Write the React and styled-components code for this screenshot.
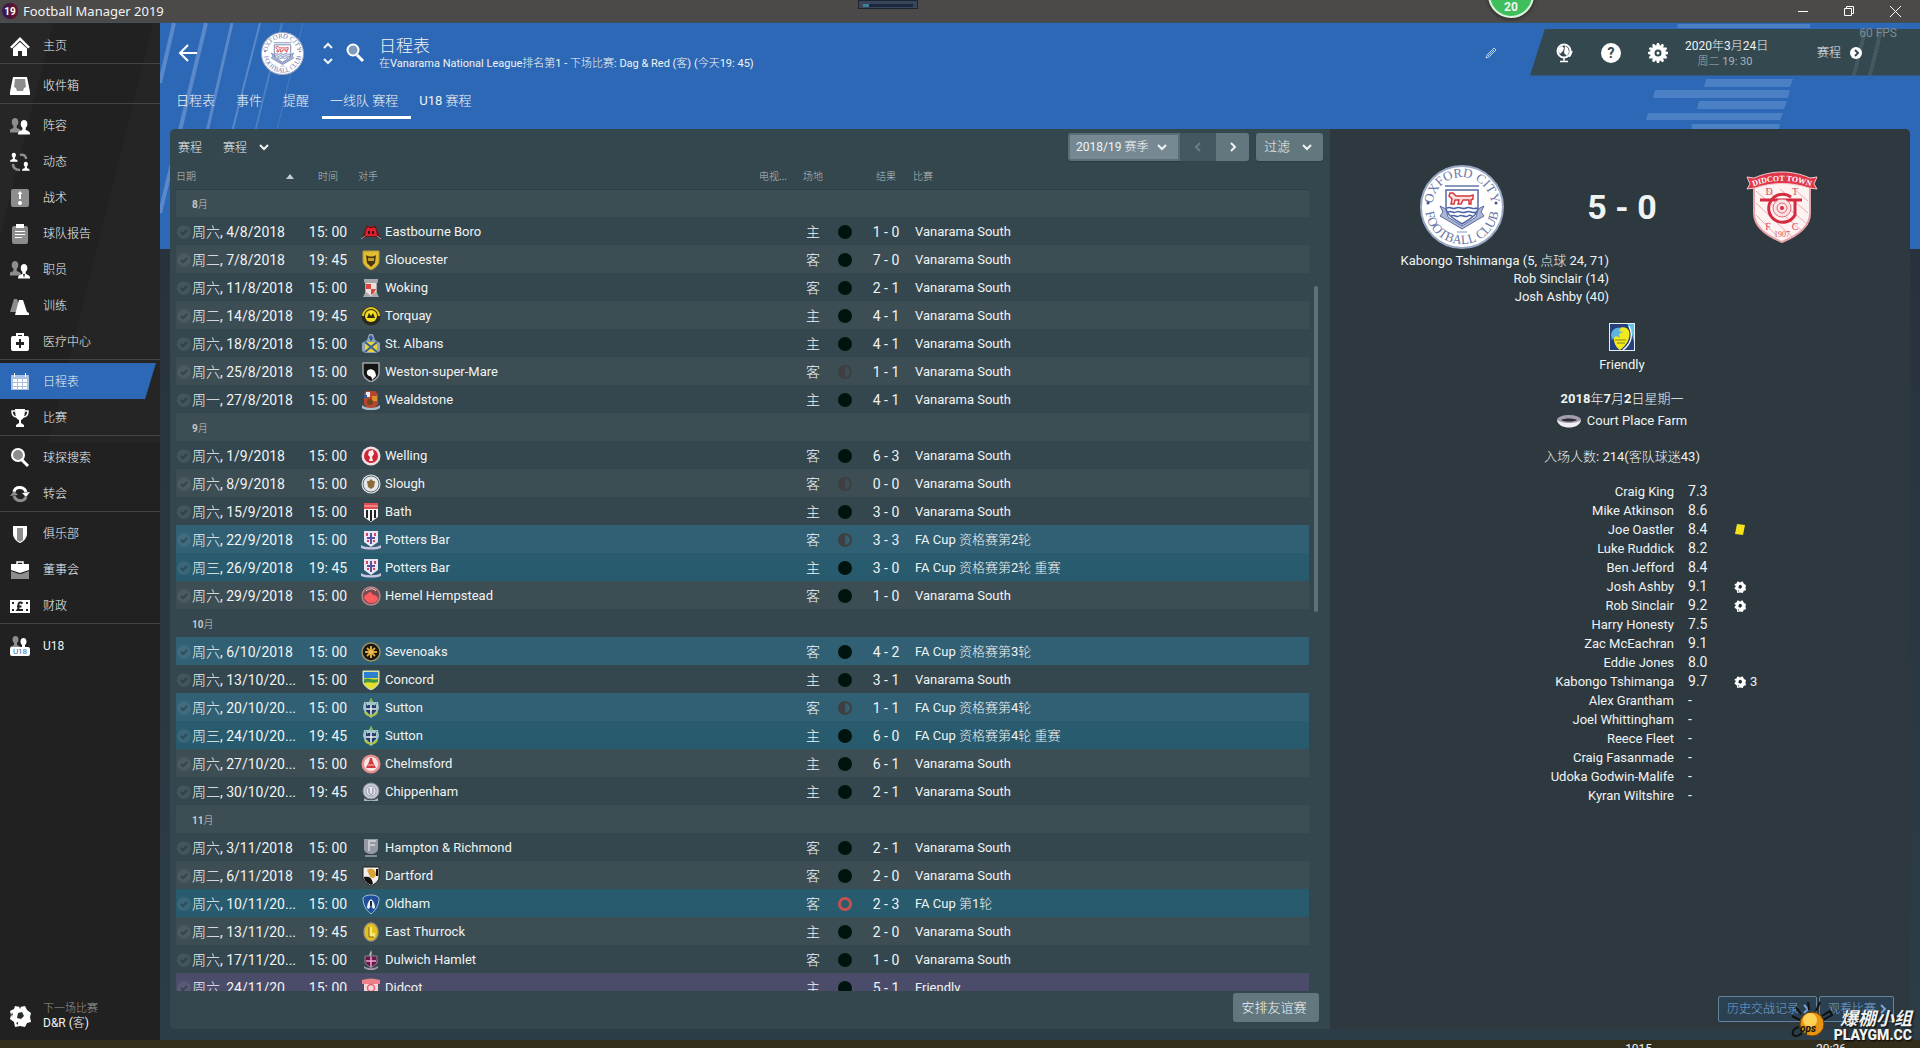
import styled, { createGlobalStyle, css } from "styled-components";

const menuGroups = [
  [{ icon: "home", label: "主页" }],
  [{ icon: "inbox", label: "收件箱" }],
  [
    { icon: "squad", label: "阵容" },
    { icon: "dynamics", label: "动态" },
    { icon: "tactics", label: "战术" },
    { icon: "report", label: "球队报告" },
    { icon: "staff", label: "职员" },
    { icon: "training", label: "训练" },
    { icon: "medical", label: "医疗中心" },
  ],
  [
    { icon: "calendar", label: "日程表", active: true },
    { icon: "trophy", label: "比赛" },
  ],
  [
    { icon: "search", label: "球探搜索" },
    { icon: "transfer", label: "转会" },
  ],
  [
    { icon: "club", label: "俱乐部" },
    { icon: "board", label: "董事会" },
    { icon: "finance", label: "财政" },
  ],
  [{ icon: "u18", label: "U18" }],
];

const tabs = ["日程表", "事件", "提醒", "一线队 赛程", "U18 赛程"];

const VS = "Vanarama South";

// [date, time, crest, opponent, venue, outcome, score, competition, kind]
const fixtures = [
  { month: "8" },
  ["周六, 4/8/2018", "15: 00", "eastbourne", "Eastbourne Boro", "主", "win", "1 - 0", VS],
  ["周二, 7/8/2018", "19: 45", "gloucester", "Gloucester", "客", "win", "7 - 0", VS],
  ["周六, 11/8/2018", "15: 00", "woking", "Woking", "客", "win", "2 - 1", VS],
  ["周二, 14/8/2018", "19: 45", "torquay", "Torquay", "主", "win", "4 - 1", VS],
  ["周六, 18/8/2018", "15: 00", "albans", "St. Albans", "主", "win", "4 - 1", VS],
  ["周六, 25/8/2018", "15: 00", "weston", "Weston-super-Mare", "客", "draw", "1 - 1", VS],
  ["周一, 27/8/2018", "15: 00", "wealdstone", "Wealdstone", "主", "win", "4 - 1", VS],
  { month: "9" },
  ["周六, 1/9/2018", "15: 00", "welling", "Welling", "客", "win", "6 - 3", VS],
  ["周六, 8/9/2018", "15: 00", "slough", "Slough", "客", "draw", "0 - 0", VS],
  ["周六, 15/9/2018", "15: 00", "bath", "Bath", "主", "win", "3 - 0", VS],
  ["周六, 22/9/2018", "15: 00", "potters", "Potters Bar", "客", "draw", "3 - 3", "FA Cup 资格赛第2轮", "cup"],
  ["周三, 26/9/2018", "19: 45", "potters", "Potters Bar", "主", "win", "3 - 0", "FA Cup 资格赛第2轮 重赛", "cup"],
  ["周六, 29/9/2018", "15: 00", "hemel", "Hemel Hempstead", "客", "win", "1 - 0", VS],
  { month: "10" },
  ["周六, 6/10/2018", "15: 00", "sevenoaks", "Sevenoaks", "客", "win", "4 - 2", "FA Cup 资格赛第3轮", "cup"],
  ["周六, 13/10/20...", "15: 00", "concord", "Concord", "主", "win", "3 - 1", VS],
  ["周六, 20/10/20...", "15: 00", "sutton", "Sutton", "客", "draw", "1 - 1", "FA Cup 资格赛第4轮", "cup"],
  ["周三, 24/10/20...", "19: 45", "sutton", "Sutton", "主", "win", "6 - 0", "FA Cup 资格赛第4轮 重赛", "cup"],
  ["周六, 27/10/20...", "15: 00", "chelmsford", "Chelmsford", "主", "win", "6 - 1", VS],
  ["周二, 30/10/20...", "19: 45", "chippenham", "Chippenham", "主", "win", "2 - 1", VS],
  { month: "11" },
  ["周六, 3/11/2018", "15: 00", "hampton", "Hampton & Richmond", "客", "win", "2 - 1", VS],
  ["周二, 6/11/2018", "19: 45", "dartford", "Dartford", "客", "win", "2 - 0", VS],
  ["周六, 10/11/20...", "15: 00", "oldham", "Oldham", "客", "loss", "2 - 3", "FA Cup 第1轮", "cup"],
  ["周二, 13/11/20...", "19: 45", "thurrock", "East Thurrock", "主", "win", "2 - 0", VS],
  ["周六, 17/11/20...", "15: 00", "dulwich", "Dulwich Hamlet", "客", "win", "1 - 0", VS],
  ["周六, 24/11/20...", "15: 00", "didcot", "Didcot", "主", "win", "5 - 1", "Friendly", "friendly"],
];

const players = [
  ["Craig King", "7.3"],
  ["Mike Atkinson", "8.6"],
  ["Joe Oastler", "8.4", "card"],
  ["Luke Ruddick", "8.2"],
  ["Ben Jefford", "8.4"],
  ["Josh Ashby", "9.1", "goal"],
  ["Rob Sinclair", "9.2", "goal"],
  ["Harry Honesty", "7.5"],
  ["Zac McEachran", "9.1"],
  ["Eddie Jones", "8.0"],
  ["Kabongo Tshimanga", "9.7", "goal", "3"],
  ["Alex Grantham", "-"],
  ["Joel Whittingham", "-"],
  ["Reece Fleet", "-"],
  ["Craig Fasanmade", "-"],
  ["Udoka Godwin-Malife", "-"],
  ["Kyran Wiltshire", "-"],
];

/* ---------- icons ---------- */

const person = "M0 14c0-3 2-3 4-4V8C3 7 2.500 6 2.500 4.500 2.500 2 4 1 5.500 1S8.500 2 8.500 4.500C8.500 6 8 7 7 8v2c2 1 4 1 4 4z";

const menuIcons = {
  home: (
    <g fill="#fff">
      <path d="M10 1 0 11l2 1.500 8-8 8 8 2-1.500z" />
      <path d="M3 12.500 10 6l7 6.500V20h-5v-5H8v5H3z" />
    </g>
  ),
  inbox: (
    <g>
      <path d="M3 1h14l3 15v3H0v-3z" fill="#fff" />
      <path d="M5 3h10l1 8-2 1-1 3H7l-1-3-2-1z" fill="#8d8d8d" />
    </g>
  ),
  squad: (
    <g>
      <path d={person} transform="translate(-1 1) scale(1.100)" fill="#8d8d8d" />
      <path d={person} transform="translate(8 3) scale(1.100)" fill="#fff" />
    </g>
  ),
  dynamics: (
    <g>
      <path d={person} transform="translate(0 0) scale(.7)" fill="#fff" />
      <path d={person} transform="translate(12 9) scale(.7)" fill="#fff" />
      <path d="M10 3c4-1 6 1 6 4M3 12c0 4 3 6 7 6" fill="none" stroke="#8d8d8d" strokeWidth="2.500" />
    </g>
  ),
  tactics: (
    <g>
      <rect x="1" y="1" width="18" height="18" rx="2" fill="#8d8d8d" />
      <path d="M10 3 7.500 6H9v5h2V6h1.500z" fill="#fff" />
      <circle cx="10" cy="15" r="2" fill="#fff" />
    </g>
  ),
  report: (
    <g>
      <rect x="2" y="2" width="16" height="18" rx="2" fill="#8d8d8d" />
      <path d="M6 0h8v4H6zM5 7h10v1H5zM5 10h10v1H5zM5 13h7v1H5z" fill="#fff" />
    </g>
  ),
  staff: (
    <g>
      <path d={person} transform="translate(-1 0) scale(1.100)" fill="#8d8d8d" />
      <path d={person} transform="translate(8 3) scale(1.100)" fill="#fff" />
      <path d="m13 14 1 4 1-4z" fill="#222" />
    </g>
  ),
  training: (
    <g>
      <path d="M0 16 4 3h3l5 13z" fill="#8d8d8d" />
      <path d="M5 19 9 4h4l4 12 2 1v2z" fill="#fff" />
    </g>
  ),
  medical: (
    <g>
      <path d="M7 5V2h6v3" fill="none" stroke="#fff" strokeWidth="2" />
      <rect x="1" y="4" width="18" height="15" rx="2" fill="#fff" />
      <path d="M9 7h2v3h3v3h-3v3H9v-3H6v-3h3z" fill="#222" />
    </g>
  ),
  calendar: (
    <g>
      <path d="M1 3h18v15H1z" fill="#a8c0e2" />
      <path d="M4 1h1v4H4zM15 1h1v4h-1zM3 7h4v3H3zM8 7h4v3H8zM13 7h4v3h-4zM3 11h4v3H3zM8 11h4v3H8zM13 11h4v3h-4zM3 15h4v2H3zM8 15h4v2H8zM13 15h4v2h-4z" fill="#fff" />
    </g>
  ),
  trophy: (
    <g>
      <path d="M5 1h10c0 6-1 10-4 11v3l3 2v2H6v-2l3-2v-3C6 11 5 7 5 1z" fill="#fff" />
      <path d="M5 3H2c0 4 1 6 5 6M15 3h3c0 4-1 6-5 6" fill="none" stroke="#fff" strokeWidth="1.500" />
    </g>
  ),
  search: (
    <g>
      <circle cx="8" cy="7" r="6" fill="#8d8d8d" stroke="#fff" strokeWidth="2" />
      <path d="m12 12 6 6" stroke="#fff" strokeWidth="3" />
    </g>
  ),
  transfer: (
    <g fill="none" strokeWidth="3">
      <path d="M4 8c1-6 10-6 12 0" stroke="#fff" />
      <path d="M4 12c2 6 10 6 12 1" stroke="#8d8d8d" />
      <path d="m12 9 8-1-4 5z" fill="#fff" stroke="none" />
      <path d="m0 12 4-5 4 4z" fill="#8d8d8d" stroke="none" />
    </g>
  ),
  club: (
    <g>
      <path d="M3 2h14v8c0 4-4 8-7 9-3-1-7-5-7-9z" fill="#fff" />
      <path d="M7 4h6v12l-3 2-3-2z" fill="#8d8d8d" />
    </g>
  ),
  board: (
    <g>
      <path d="M7 5V2h6v3" fill="none" stroke="#fff" strokeWidth="1.500" />
      <path d="M1 4h18v6l-9 3-9-3z" fill="#fff" />
      <path d="M1 11l8 3h2l8-3v8H1z" fill="#8d8d8d" />
    </g>
  ),
  finance: (
    <g>
      <path d="M0 4h20v13H0z" fill="#fff" />
      <path d="M2 6h2v2H2zM16 6h2v2h-2zM2 13h2v2H2zM16 13h2v2h-2z" fill="#222" />
      <path d="M12.500 7.500c-2-2-4-1-4 1 0 3 1 3-1 5.500h5.500M7 10.500h4.500" fill="none" stroke="#222" strokeWidth="2" />
    </g>
  ),
  u18: (
    <g>
      <path d={person} transform="translate(0 -1)" fill="#8d8d8d" />
      <path d={person} transform="translate(8 1)" fill="#fff" />
      <rect y="11" width="20" height="9" rx="2" fill="#fff" />
      <text x="10" y="18" fontSize="8" textAnchor="middle" fill="#2c68b5">U18</text>
    </g>
  ),
};

function BallIcon({ size }) {
  return (
    <svg width={size} height={size} viewBox="0 0 22 22" aria-hidden="true">
      <path d="M6 1l5 1 5-1 2 4 4 3-1 4 1 5-4 1-2 4-5-1-5 1-1-5-4-3 1-4-1-4 4-2z" fill="#fff" />
      <path d="m9 8 4-1 2 4-3 3-4-1z" fill="#242e33" />
      <path d="m10 1 2 1-1 2zM2 9l2-1-1 4zM7 18l2-1 0 3z" fill="#242e33" />
    </svg>
  );
}

function Chevron({ dir = "down", size = 12, width = 2 }) {
  const d = {
    down: "m2 4 4 4 4-4",
    up: "m2 8 4-4 4 4",
    left: "m8 2-4 4 4 4",
    right: "m4 2 4 4-4 4",
  }[dir];
  return (
    <svg width={size} height={size} viewBox="0 0 12 12" aria-hidden="true">
      <path d={d} fill="none" stroke="currentColor" strokeWidth={width} />
    </svg>
  );
}

const shield = "M2 1h16v10c0 4-4 7-8 9-4-2-8-5-8-9z";

const crests = {
  eastbourne: (
    <g>
      <path d="M0 17 4 8l1-4h10l1 4 4 9-5-2H5z" fill="#5a1a1e" />
      <path d="M5 8c2-5 8-5 10 0l1 6H4z" fill="#e0202e" />
      <path d="M7 9h2v3H7zM11 9h2v3h-2zM8 5h4v1H8z" fill="#3b0d10" />
      <path d="M0 17l4-3M20 17l-4-3" stroke="#a9a5a5" />
    </g>
  ),
  gloucester: (
    <g>
      <path d={shield} fill="#e2bd2e" stroke="#b39b42" />
      <path d="M5 5c3 2 7 2 10 0l-1 8-4 4-4-4z" fill="#463713" />
      <path d="M7 8h6v3H7z" fill="#c79d23" />
    </g>
  ),
  woking: (
    <g>
      <path d="M3 1h14v3l-1 1v10l2 4H2l2-4V5L3 4z" fill="#a8a9aa" />
      <path d="M5 5h10v9l-5 4-5-4z" fill="#f1dede" />
      <path d="M5 6h5v5H5zM10 11h5l-2 4-3 2z" fill="#dd463f" />
    </g>
  ),
  torquay: (
    <g>
      <circle cx="10" cy="10" r="9.500" fill="#2a2a1c" />
      <path d="M1 10a9 9 0 0 1 18 0z" fill="#e5c91a" />
      <circle cx="10" cy="10" r="7" fill="#2a2a1c" />
      <circle cx="10" cy="10" r="6" fill="#f4dc24" />
      <path d="m6 12 2-5 2 3 2-3 2 5z" fill="#2c2a10" />
    </g>
  ),
  albans: (
    <g>
      <path d="M8 0h4l2 6 5 3v8l-4 2H4l-3-2V9l5-3z" fill="#8fa3b5" />
      <path d="M4 8h12v10H4z" fill="#e8d338" />
      <path d="m4 8 12 10M16 8 4 18" stroke="#3a6296" strokeWidth="2" />
      <path d="m8 3 2-2 2 3-2 4z" fill="#2e5a9a" />
    </g>
  ),
  weston: (
    <g>
      <path d={shield} fill="#151515" stroke="#9fa5a7" strokeWidth="1.500" />
      <path d="M7 8c4-2 8 1 8 6l-4 4c0-3-1-4-3-4-2-1-3-4-1-6z" fill="#fff" />
    </g>
  ),
  wealdstone: (
    <g>
      <path d="M3 4 5 1h9l3 3v10l-3 4H6l-3-4z" fill="#b4472e" />
      <path d="M5 2h4v5H5z" fill="#e8eef5" />
      <path d="M3 5h3v3H3z" fill="#2f5ca8" />
      <path d="M11 6h5v5h-5z" fill="#e0902a" />
      <circle cx="9" cy="12" r="3" fill="#73421c" />
      <path d="M1 15c4 4 14 4 18 0v3c-4 3-14 3-18 0z" fill="#a8bdcb" />
    </g>
  ),
  welling: (
    <g>
      <circle cx="10" cy="10" r="9.500" fill="#f0e2e3" />
      <circle cx="10" cy="10" r="7" fill="#ce2434" />
      <path d="M8 5l4-1 1 4-2 3 1 4H8l1-4-2-2z" fill="#fbeeee" />
    </g>
  ),
  slough: (
    <g>
      <circle cx="10" cy="10" r="9.500" fill="#e5e7e8" />
      <circle cx="10" cy="10" r="8" fill="none" stroke="#5d6b7a" />
      <path d="M6 7h2l2-2 2 2h2l-1 6-3 2-3-2z" fill="#8a6d3a" />
    </g>
  ),
  bath: (
    <g>
      <path d="M3 1h14v14l-7 5-7-5z" fill="#f4f4f4" />
      <path d="M3 1h14v6H3z" fill="#e04c50" />
      <path d="M6 8v8M10 8v11M14 8v8" stroke="#222" strokeWidth="2" />
      <path d="M3 4h14" stroke="#f6b9bb" />
    </g>
  ),
  potters: (
    <g>
      <path d="M3 1h14v11l-7 5-7-5z" fill="#e9e7f4" />
      <path d="M10 3v11M6 8h8" stroke="#5b4fa0" strokeWidth="2" />
      <path d="M5 3h2v3H5zM13 3h2v3h-2zM6 10h2v2H6zM12 10h2v2h-2z" fill="#d7435e" />
      <path d="M0 15c4 3 16 3 20 0v3c-5 2-15 2-20 0z" fill="#c9c5df" />
    </g>
  ),
  hemel: (
    <g>
      <circle cx="10" cy="10" r="9" fill="#7b4b50" stroke="#b58689" strokeWidth="1.500" />
      <path d="M3 12c1-5 3-2 5-6 2 0 3 1 4 3 3 0 5 2 5 4-2 3-4 4-7 4s-5-2-7-5z" fill="#ff5c60" />
      <path d="M5 5c3-3 8-3 10 0" stroke="#fbd7d7" fill="none" />
    </g>
  ),
  sevenoaks: (
    <g>
      <circle cx="10" cy="10" r="9" fill="#161616" stroke="#a08e5d" strokeWidth="1.500" />
      <path d="M10 4v12M4 10h12M6 6l8 8M14 6l-8 8" stroke="#dba63a" strokeWidth="2" />
      <circle cx="10" cy="10" r="2" fill="#f0c158" />
    </g>
  ),
  concord: (
    <g>
      <path d={shield} fill="#e3e12d" stroke="#d7e7ef" />
      <path d="M3 2h14v6H3z" fill="#2f7fd0" />
      <path d="M3 9c5-2 9 2 14 0v3c-5 2-9-1-14 1z" fill="#3f9545" />
    </g>
  ),
  sutton: (
    <g>
      <path d="m10 0 2 4h5l1 6-2 5-6 5-6-5-2-5 1-6h5z" fill="#a5c5cb" />
      <path d="M5 7h10v6l-5 5-5-5z" fill="#263a68" />
      <path d="M10 7v10M5 11h10" stroke="#edf4f5" strokeWidth="1.500" />
      <path d="M4 14c2 5 10 5 12 0" stroke="#a7c736" strokeWidth="2" fill="none" />
      <path d="m9 1 1-1 2 3-2 2z" fill="#77b43a" />
      <path d="M4 5l3 3M16 5l-3 3" stroke="#668f98" />
    </g>
  ),
  chelmsford: (
    <g>
      <circle cx="10" cy="10" r="9.500" fill="#e58f8f" />
      <circle cx="10" cy="10" r="7" fill="#f7e8e8" />
      <path d="m9 4 2 0 1 4 3 6H5l3-6z" fill="#d2393c" />
      <path d="M7 11h6" stroke="#f3c9c9" />
    </g>
  ),
  chippenham: (
    <g>
      <circle cx="10" cy="9" r="8" fill="#c6c8d4" stroke="#8c90a0" />
      <circle cx="10" cy="9" r="5" fill="#e7e8ef" stroke="#9a9dae" />
      <path d="M8 6v4c0 3 4 3 4 0V6" stroke="#77799a" fill="none" />
      <path d="M3 16c4 3 10 3 14 0v3H3z" fill="#aeb1bd" />
    </g>
  ),
  hampton: (
    <g>
      <path d="M3 1h14v10c0 3-4 5-7 5s-7-2-7-5z" fill="#9599a4" />
      <path d="M8 2v11M8 3h7M8 7h6" stroke="#c6c8cd" strokeWidth="2" />
      <path d="M4 17h12v2H4z" fill="#868b92" />
    </g>
  ),
  dartford: (
    <g>
      <path d={shield} fill="#f1efe8" stroke="#1f1f1f" />
      <path d="M3 11c4-1 8 0 9 7l-2 1c-4-2-7-4-7-8z" fill="#121212" />
      <path d="M6 4c5-3 9 0 9 5-1 3-4 4-6 2z" fill="#dca23a" />
      <path d="M15 3h2v7h-2z" fill="#121212" />
    </g>
  ),
  oldham: (
    <g>
      <path d="M2 4c2-4 14-4 16 0 0 7-3 12-8 16C5 16 2 11 2 4z" fill="#1f4f9b" stroke="#a9bfd8" />
      <path d="M10 5c3 2 4 6 4 9l-2 1-2-4-2 4-2-1c0-3 1-7 4-9z" fill="#eceff0" />
      <path d="M9 7h2v5H9z" fill="#202a36" />
    </g>
  ),
  thurrock: (
    <g>
      <ellipse cx="10" cy="10" rx="7" ry="9" fill="#e6c01c" stroke="#9f9775" strokeWidth="1.500" />
      <path d="M8 5h3v6h3v4H8z" fill="#f9ea75" />
      <path d="M8 5v10h5" stroke="#7d6514" fill="none" />
    </g>
  ),
  dulwich: (
    <g>
      <path d="M4 6h12v7l-6 5-6-5z" fill="#6a1547" stroke="#8f8794" />
      <path d="M10 7v10M5 11h10" stroke="#f0a6d6" strokeWidth="1.500" />
      <path d="m10 0 1 3-1 4-2-2z" fill="#a9aeb3" />
      <path d="M3 16c4 3 10 3 14 0v2c-4 3-10 3-14 0z" fill="#a496ab" />
    </g>
  ),
  didcot: (
    <g>
      <path d="M3 4h14v8c0 4-4 6-7 7-3-1-7-3-7-7z" fill="#f6d5d8" />
      <path d="M1 2c6-2 12-2 18 0v4H1z" fill="#ee8089" />
      <circle cx="10" cy="10" r="3.500" fill="none" stroke="#e4606e" strokeWidth="1.500" />
    </g>
  ),
};

function OxfordCrest({ size }) {
  return (
    <svg width={size} height={size} viewBox="0 0 84 84" role="img" aria-label="Oxford City">
      <defs>
        <path id={"top" + size} d="M13 47A29.500 29.500 0 1 1 71 47" />
        <path id={"bottom" + size} d="M5 42A37 37 0 0 0 79 42" />
      </defs>
      <circle cx="42" cy="42" r="41" fill="#fff" stroke="#9aa7c4" strokeWidth="2" />
      <g fontFamily="Liberation Serif, serif" fontSize="13" fill="#6b78a8" textAnchor="middle">
        <text><textPath href={"#top" + size} startOffset="50%">OXFORD CITY</textPath></text>
        <text><textPath href={"#bottom" + size} startOffset="50%">FOOTBALL CLUB</textPath></text>
      </g>
      <circle cx="8" cy="38" r="1.500" fill="#44528a" />
      <circle cx="76" cy="38" r="1.500" fill="#44528a" />
      <path d="M25 21h34" stroke="#8b96bd" strokeWidth="2" />
      <path d="m20 41 6 3 2 8 14 9 14-9 2-8 6-3-3 6 3 4-7 4-15 9-15-9-7-4 3-4z" fill="#a9b6d6" stroke="#5a6ba0" />
      <path d="M26 25h32v17c0 8-8 12-16 17-8-5-16-9-16-17z" fill="#fff" stroke="#5469a3" strokeWidth="1.500" />
      <path d="M30 28h3l3 3h14l3-1v4l-2 1v4h-2v-4h-6l-2 4h-3l1-4h-4l-1 4h-3l1-5-3-3z" fill="#fbe2e2" stroke="#d4393d" strokeWidth="1.500" />
      <path d="M27 43c4-2 5 2 9 0s6 2 10 0 6 2 11 0M28 47c4-2 5 2 8 0s6 2 10 0 6 2 10 0M31 51c4-2 5 2 8 0s6 2 9 0 4 1 5 0" fill="none" stroke="#4a64a5" strokeWidth="1.500" />
      <path d="M37 67h10" stroke="#8b96bd" />
    </svg>
  );
}

function DidcotCrest() {
  return (
    <svg width="72" height="72" viewBox="0 0 72 72" role="img" aria-label="Didcot Town">
      <path d="M8 12h56v30c0 14-13 23-28 29C21 65 8 56 8 42z" fill="#fdf3f3" stroke="#e5a4ab" strokeWidth="2" />
      <path d="m10 20 46 40M10 32l36 34M20 18l42 36M34 18l28 24M48 18l14 12M10 44l20 20" stroke="#efa9b1" />
      <path d="M1 6l7 1C26-1 46-1 64 7l7-1-3 7 3 5-8-1C45 11 27 11 9 17l-8 1 3-5z" fill="#e0384a" stroke="#f2c9cd" />
      <path id="didcotName" d="M8 15Q36 5 64 15" fill="none" />
      <g fontFamily="Liberation Serif, serif" fill="#fff" fontSize="8" fontWeight="bold" textAnchor="middle">
        <text><textPath href="#didcotName" startOffset="50%">DIDCOT TOWN</textPath></text>
      </g>
      <g fontFamily="Liberation Serif, serif" fill="#d9475a" fontSize="10" textAnchor="middle">
        <text x="23" y="24">D</text>
        <text x="49" y="24">T</text>
        <text x="22" y="59">F</text>
        <text x="49" y="59">C</text>
        <text x="36" y="66" fontSize="8">1907</text>
      </g>
      <path d="M45 26A14 14 0 1 0 49 44V30" fill="none" stroke="#d52b40" strokeWidth="3" />
      <path d="M14 29h42" stroke="#d52b40" strokeWidth="3" />
      <circle cx="36" cy="37" r="9" fill="#fbe3e5" stroke="#e0697a" />
      <circle cx="36" cy="37" r="5" fill="none" stroke="#e0697a" />
      <circle cx="36" cy="37" r="2" fill="#d52b40" />
    </svg>
  );
}

function StatusDot({ outcome }) {
  return (
    <svg width="16" height="16" viewBox="0 0 16 16" role="img" aria-label={outcome}>
      {outcome === "win" && <circle cx="8" cy="8" r="7" fill="#00140f" />}
      {outcome === "draw" && (
        <g>
          <circle cx="8" cy="8" r="6" fill="none" stroke="#3f3f42" strokeWidth="2" />
          <path d="M8 2a6 6 0 0 0 0 12z" fill="#3f3f42" />
        </g>
      )}
      {outcome === "loss" && <circle cx="8" cy="8" r="5.500" fill="none" stroke="#c8504e" strokeWidth="3" />}
    </svg>
  );
}

/* ---------- page ---------- */

export default function App() {
  return (
    <Page>
      <GlobalStyle />
      <TitleBar>
        <svg width="16" height="16" viewBox="0 0 16 16" aria-hidden="true">
          <circle cx="8" cy="8" r="8" fill="#3b1a4b" />
          <path d="M8 0a8 8 0 0 1 0 16z" fill="#5b1633" />
          <text x="8" y="12" fontSize="10" fontWeight="bold" textAnchor="middle" fill="#fff">19</text>
        </svg>
        <AppName>Football Manager 2019</AppName>
        <WindowButton aria-label="Minimize">
          <svg width="10" height="10" viewBox="0 0 10 10"><path d="M0 5.500h10" stroke="#fff" /></svg>
        </WindowButton>
        <WindowButton aria-label="Restore">
          <svg width="10" height="10" viewBox="0 0 10 10"><path d="M.5 2.500h7v7h-7zM2.500 2.500v-2h7v7h-2" fill="none" stroke="#fff" /></svg>
        </WindowButton>
        <WindowButton aria-label="Close">
          <svg width="11" height="11" viewBox="0 0 11 11"><path d="m0 0 11 11M11 0 0 11" stroke="#fff" /></svg>
        </WindowButton>
        <CaptureBar><i /></CaptureBar>
        <Badge>20</Badge>
      </TitleBar>

      <Body>
        <Sidebar>
          {menuGroups.map((group, i) => (
            <MenuGroup key={i}>
              {group.map((item) => (
                <MenuLink key={item.label} href="#" $active={item.active}>
                  <svg width="20" height="20" viewBox="0 0 20 20" aria-hidden="true">{menuIcons[item.icon]}</svg>
                  {item.label}
                </MenuLink>
              ))}
            </MenuGroup>
          ))}
          <NextMatch href="#">
            <BallIcon size={22} />
            <span>
              <small>下一场比赛</small>
              D&amp;R (客)
            </span>
          </NextMatch>
        </Sidebar>

        <Content>
          <HeaderArt />
          <Header>
            <IconButton aria-label="返回">
              <svg width="20" height="20" viewBox="0 0 20 20"><path d="M19 10H3M10 2l-8 8 8 8" fill="none" stroke="#fff" strokeWidth="2" /></svg>
            </IconButton>
            <ClubBadge><OxfordCrest size={43} /></ClubBadge>
            <Stepper>
              <IconButton aria-label="上一个"><Chevron dir="up" /></IconButton>
              <IconButton aria-label="下一个"><Chevron /></IconButton>
            </Stepper>
            <IconButton aria-label="搜索">
              <svg width="20" height="20" viewBox="0 0 20 20">
                <circle cx="8" cy="7" r="5.500" fill="#7f9dbb" stroke="#fff" strokeWidth="2" />
                <path d="m12 12 6 6" stroke="#fff" strokeWidth="3" />
              </svg>
            </IconButton>
            <Heading>
              <h1>日程表</h1>
              <p>在Vanarama National League排名第1 - 下场比赛: Dag &amp; Red (客) (今天19: 45)</p>
            </Heading>
            <IconButton aria-label="编辑">
              <svg width="14" height="14" viewBox="0 0 14 14"><path d="m2 12 1-3 7-7 2 2-7 7zM4 10l6-6" fill="none" stroke="#b9cfec" /></svg>
            </IconButton>
            <TopMenu>
              <IconButton aria-label="世界">
                <svg width="20" height="20" viewBox="0 0 20 20">
                  <circle cx="10" cy="8" r="6.500" fill="#34484f" stroke="#fff" strokeWidth="2" />
                  <path d="M5 5l3-2 2 2-1 3-3 3-2-3zM11 3l3 2 1 4-2 4-3-3z" fill="#fff" />
                  <path d="M10 15v3M6 18.500h8M15 13c1 1 2-2 3-5" stroke="#fff" strokeWidth="1.500" fill="none" />
                </svg>
              </IconButton>
              <IconButton aria-label="帮助">
                <svg width="20" height="20" viewBox="0 0 20 20">
                  <circle cx="10" cy="10" r="10" fill="#fff" />
                  <text x="10" y="15" fontSize="14" fontWeight="bold" textAnchor="middle" fill="#34484f">?</text>
                </svg>
              </IconButton>
              <IconButton aria-label="设置">
                <svg width="20" height="20" viewBox="-10 -10 20 20">
                  {[0, 30, 60, 90, 120, 150].map((a) => (
                    <path key={a} d="M-2-7-1-10h2l1 3v14l-1 3h-2l-1-3z" transform={`rotate(${a})`} fill="#fff" />
                  ))}
                  <circle r="7" fill="#fff" />
                  <circle r="3.500" fill="#34484f" />
                  <circle r="1.500" fill="#fff" />
                </svg>
              </IconButton>
              <Clock>
                2020年3月24日
                <small>周二 19: 30</small>
              </Clock>
              <ContinueButton>
                赛程
                <svg width="12" height="12" viewBox="0 0 12 12">
                  <circle cx="6" cy="6" r="6" fill="#fff" />
                  <path d="m5 3 3 3-3 3" fill="none" stroke="#34484f" strokeWidth="2" />
                </svg>
              </ContinueButton>
            </TopMenu>
            <Fps>60 FPS</Fps>
          </Header>

          <Tabs>
            {tabs.map((tab, i) => (
              <Tab key={tab} href="#" $active={i === 3}>{tab}</Tab>
            ))}
          </Tabs>

          <Panels>
            <FixturePanel>
              <Toolbar>
                <ViewLabel htmlFor="view">赛程</ViewLabel>
                <SelectBox $plain>
                  <select id="view"><option>赛程</option></select>
                  <Chevron />
                </SelectBox>
                <SeasonGroup>
                  <SelectBox $wide>
                    <select aria-label="赛季"><option>2018/19 赛季</option></select>
                    <Chevron />
                  </SelectBox>
                  <PageButton aria-label="上一赛季" disabled><Chevron dir="left" /></PageButton>
                  <PageButton aria-label="下一赛季"><Chevron dir="right" /></PageButton>
                </SeasonGroup>
                <SelectBox>
                  <select aria-label="过滤"><option>过滤</option></select>
                  <Chevron />
                </SelectBox>
              </Toolbar>

              <ListArea>
                <Scroller>
                  <Table>
                    <colgroup>
                      <col width="126" />
                      <col width="52" />
                      <col width="401" />
                      <col width="42" />
                      <col width="32" />
                      <col width="32" />
                      <col width="50" />
                      <col />
                    </colgroup>
                    <thead>
                      <tr>
                        <th><SortLabel>日期 <svg width="8" height="5" viewBox="0 0 8 5"><path d="m0 5 4-5 4 5z" fill="#c3cdd0" /></svg></SortLabel></th>
                        <Th $center>时间</Th>
                        <Th>对手</Th>
                        <Th>电视...</Th>
                        <Th $center>场地</Th>
                        <Th />
                        <Th $center>结果</Th>
                        <Th>比赛</Th>
                      </tr>
                    </thead>
                    <tbody>
                      {fixtures.map((row, i) =>
                        row.month ? (
                          <Row key={i}>
                            <MonthCell colSpan={8}><b>{row.month}</b>月</MonthCell>
                          </Row>
                        ) : (
                          <Row key={i} $kind={row[8]}>
                            <td>
                              <Cell>
                                <svg width="14" height="14" viewBox="0 0 14 14" aria-hidden="true">
                                  <circle cx="7" cy="7" r="7" fill="#fff" opacity=".08" />
                                  <path d="m4 7 2 2 4-4" fill="none" stroke="#1d3037" strokeWidth="2" opacity=".5" />
                                </svg>
                                {row[0]}
                              </Cell>
                            </td>
                            <CenterTd>{row[1]}</CenterTd>
                            <td>
                              <Opponent>
                                <svg width="20" height="20" viewBox="0 0 20 20" aria-hidden="true">{crests[row[2]]}</svg>
                                {row[3]}
                              </Opponent>
                            </td>
                            <td />
                            <CenterTd>{row[4]}</CenterTd>
                            <CenterTd><StatusDot outcome={row[5]} /></CenterTd>
                            <CenterTd>{row[6]}</CenterTd>
                            <CompetitionTd>{row[7]}</CompetitionTd>
                          </Row>
                        )
                      )}
                    </tbody>
                  </Table>
                </Scroller>
                <ScrollTrack><i /></ScrollTrack>
              </ListArea>

              <PanelFooter>
                <SolidButton>安排友谊赛</SolidButton>
              </PanelFooter>
            </FixturePanel>

            <MatchPanel>
              <ScoreRow>
                <OxfordCrest size={84} />
                <strong>5 - 0</strong>
                <DidcotCrest />
              </ScoreRow>
              <Scorers>
                <li>Kabongo Tshimanga (5, 点球 24, 71)</li>
                <li>Rob Sinclair (14)</li>
                <li>Josh Ashby (40)</li>
              </Scorers>
              <Competition>
                <svg width="26" height="28" viewBox="0 0 26 28" aria-hidden="true">
                  <path d="M0 0h26v28H0z" fill="#e8edf2" />
                  <path d="M1 1h24v26H1z" fill="#263f7d" />
                  <path d="M18 1h7v18c-2-9-4-14-7-18z" fill="#5fc4e6" />
                  <path d="M5 11C9 2 18 3 20 8c2 7-3 15-9 19-5-3-7-9-6-16z" fill="#f3ea1c" />
                  <path d="M2 12C3 6 7 4 12 5l-2 3 4 1-4 2 1 4-4-2-4 4z" fill="#5fb3dc" />
                  <path d="M20 3c4 8 3 17-6 24" stroke="#fff" strokeWidth="1.500" fill="none" />
                  <path d="M6 17h11M8 20h8" stroke="#7c8425" />
                </svg>
                Friendly
              </Competition>
              <MatchDate><b>2018</b>年<b>7</b>月<b>2</b>日星期一</MatchDate>
              <Stadium>
                <svg width="24" height="14" viewBox="0 0 24 14" aria-hidden="true">
                  <ellipse cx="12" cy="6" rx="12" ry="5" fill="#a39db0" />
                  <path d="M0 6c1 10 23 10 24 0-4 4-20 4-24 0z" fill="#efeef2" />
                  <path d="M4 6c4-2 12-2 16 0-4 2-12 2-16 0z" fill="#2c2835" />
                </svg>
                Court Place Farm
              </Stadium>
              <Attendance>入场人数: 214(客队球迷43)</Attendance>
              <Ratings>
                <tbody>
                  {players.map(([name, rating, mark, count]) => (
                    <tr key={name}>
                      <th scope="row">{name}</th>
                      <td>{rating}</td>
                      <td>
                        <Mark>
                          {mark === "card" && (
                            <svg width="12" height="13" viewBox="0 0 12 13"><path d="m3 1 8 1-2 10-8-1z" fill="#f4e31b" /></svg>
                          )}
                          {mark === "goal" && <BallIcon size={12} />}
                          {count}
                        </Mark>
                      </td>
                    </tr>
                  ))}
                </tbody>
              </Ratings>
              <LinkRow>
                <OutlineButton>历史交战记录 <Chevron dir="right" /></OutlineButton>
                <OutlineButton>观看比赛 <Chevron dir="right" /></OutlineButton>
              </LinkRow>
            </MatchPanel>
          </Panels>
        </Content>
      </Body>

      <Taskbar>
        <span>1015</span>
        <span>20:26</span>
      </Taskbar>

      <Watermark>
        <svg width="44" height="42" viewBox="0 0 44 42" aria-hidden="true">
          <path d="M11 14 6 7M19 10l-1-8M26 11l4-9M10 20 2 16M9 27c-8 2-8 10-2 9 2 0 3-2 5-3M32 16l8-5 2 4-9 5" fill="none" stroke="#111" strokeWidth="2" />
          <circle cx="22" cy="24" r="12" fill="#e89412" stroke="#6b3b05" />
          <circle cx="20" cy="20" r="7" fill="#ffd257" />
          <text x="18" y="32" fontSize="10" fontWeight="bold" fontStyle="italic" textAnchor="middle" fill="#111">ops</text>
        </svg>
        <p>
          爆棚小组
          <span>PLAYGM.CC</span>
        </p>
      </Watermark>
    </Page>
  );
}

// slanted pinstripes on the left, short bars on the right
function HeaderArt() {
  return (
    <ArtLayer>
      <svg width="160" height="226" viewBox="0 0 160 226" aria-hidden="true">
        <g stroke="#6d97d3" opacity=".7">
          <path d="M14 0 0 60" strokeWidth="4" />
          <path d="M46 0 0 190" strokeWidth="4" />
          <path d="M72 0 20 226" strokeWidth="3" />
          <path d="M100 0 42 226" strokeWidth="2" />
          <path d="M122 0 66 226" strokeWidth="2" opacity=".7" />
          <path d="M143 0 88 226" strokeWidth="1" opacity=".6" />
        </g>
      </svg>
      <svg width="300" height="226" viewBox="0 0 300 226" aria-hidden="true">
        <g fill="#4c80c4">
          <path d="M58 1h132v4H57z" />
          <path d="M86 56h87l-3 8H84zM35 67h135l-2 8H33zM79 78h88l-3 8H77zM28 90h135l-3 7H26zM72 101h88l-2 8H71z" />
        </g>
      </svg>
    </ArtLayer>
  );
}

const GlobalStyle = createGlobalStyle`
  * {
    box-sizing: border-box;
  }
  body {
    margin: 0;
    background: #2a353d;
    color: #f0f3f3;
    font: 13px/20px Roboto, "Noto Sans CJK SC Light", "Noto Sans CJK SC", sans-serif;
  }
  h1, p, ul {
    margin: 0;
    padding: 0;
  }
  a {
    color: inherit;
    text-decoration: none;
  }
  button, select {
    font: inherit;
    color: inherit;
    border: none;
    background: none;
    padding: 0;
  }
  svg {
    display: block;
    flex: none;
  }
`;

const Page = styled.div`
  position: relative;
  display: flex;
  flex-direction: column;
  height: 100vh;
  overflow: hidden;
`;

const TitleBar = styled.div`
  position: relative;
  display: flex;
  align-items: center;
  flex: none;
  height: 23px;
  padding: 0 2px;
  background: #4c4a48;
  border-bottom: 1px solid #41525f;
`;

const AppName = styled.span`
  flex: 1;
  padding-left: 5px;
  font: 13px/22px "Noto Sans", sans-serif;
`;

const WindowButton = styled.button`
  display: flex;
  align-items: center;
  justify-content: center;
  width: 46px;
  height: 20px;
`;

const CaptureBar = styled.div`
  position: absolute;
  top: 0;
  left: 858px;
  width: 60px;
  height: 9px;
  padding: 3px 4px;
  background: #39465a;
  border: 1px solid #1d2433;

  i {
    display: block;
    height: 3px;
    background: linear-gradient(90deg, #3d7f95 6px, #1c2740 6px);
  }
`;

const Badge = styled.div`
  position: absolute;
  z-index: 2;
  top: -28px;
  right: 386px;
  width: 46px;
  height: 46px;
  padding-top: 23px;
  background: #3fbf5c;
  border: 2px solid #d9f3dd;
  border-radius: 50%;
  box-shadow: 0 1px 4px #0008;
  text-align: center;
  font-size: 12px;
  line-height: 20px;
  font-weight: bold;
`;

const Body = styled.div`
  display: flex;
  flex: 1;
  min-height: 0;
`;

const Sidebar = styled.nav`
  display: flex;
  flex-direction: column;
  width: 160px;
  padding-top: 4px;
  background:
    linear-gradient(104deg, transparent 58%, #ffffff05 58%),
    linear-gradient(104deg, #262626 20%, #212121 20%);
  background-size: 100% 420px;
  background-repeat: no-repeat;
  background-color: #212121;
  font-size: 12px;
`;

const MenuGroup = styled.div`
  & + & {
    border-top: 1px solid #444;
    padding-top: 3px;
  }
`;

const MenuLink = styled.a`
  display: flex;
  align-items: center;
  gap: 13px;
  height: 36px;
  padding: 2px 0 0 10px;
  ${(p) =>
    p.$active &&
    css`
      width: 156px;
      background: #2c68b5;
      clip-path: polygon(0 0, 100% 0, 93% 100%, 0 100%);
    `}
`;

const NextMatch = styled.a`
  display: flex;
  align-items: center;
  gap: 12px;
  margin-top: auto;
  padding: 0 0 9px 9px;
  line-height: 15px;

  small {
    display: block;
    font-size: 11px;
    color: #9a9a9a;
  }
`;

const Content = styled.main`
  position: relative;
  display: flex;
  flex-direction: column;
  flex: 1;
  min-width: 0;
  background: linear-gradient(#2c68b5 226px, #28323c 226px, #2c3d47);
`;

const ArtLayer = styled.div`
  position: absolute;
  inset: 0 0 auto;
  display: flex;
  justify-content: space-between;
`;

const Header = styled.header`
  position: relative;
  display: flex;
  align-items: center;
  height: 60px;
  padding-left: 18px;
`;

const IconButton = styled.button`
  display: flex;
  align-items: center;
  justify-content: center;
`;

const ClubBadge = styled.div`
  padding: 0 18px 0 63px;
`;

const Stepper = styled.div`
  display: flex;
  flex-direction: column;
  gap: 3px;
  margin-right: 11px;
`;

const Heading = styled.div`
  flex: 1;
  padding: 2px 0 0 14px;

  h1 {
    font-size: 17px;
    line-height: 20px;
    font-weight: 400;
  }
  p {
    font-size: 11px;
    line-height: 16px;
  }
`;

const TopMenu = styled.div`
  display: flex;
  align-items: center;
  gap: 27px;
  width: 390px;
  height: 47px;
  margin: 0 0 2px 32px;
  padding: 2px 0 0 24px;
  background:
    linear-gradient(104deg, transparent 83%, #5b717a66 83%, #5b717a66 84%, transparent 84%, transparent 87%, #5b717a66 87%, #5b717a66 88%, transparent 88%),
    #34484f;
  clip-path: polygon(15px 0, 100% 0, 100% 100%, 0 100%);
`;

const Clock = styled.div`
  width: 80px;
  margin-left: -10px;
  padding-top: 2px;
  font-size: 12px;
  line-height: 15px;
  text-align: center;
  white-space: nowrap;

  small {
    display: block;
    font-size: 11px;
    color: #a9b5b9;
  }
`;

const ContinueButton = styled.button`
  display: flex;
  align-items: center;
  gap: 9px;
  margin-left: 25px;
  font-size: 12px;
`;

const Fps = styled.span`
  position: absolute;
  top: 2px;
  right: 23px;
  font-size: 12px;
  line-height: 16px;
  color: #7d8d93;
`;

const Tabs = styled.nav`
  position: relative;
  display: flex;
  height: 46px;
  padding-left: 8px;
`;

const Tab = styled.a`
  height: 36px;
  padding: 8px 13px 0 8px;
  ${(p) => p.$active && "border-bottom: 3px solid #fff;"}
`;

const Panels = styled.div`
  position: relative;
  display: flex;
  flex: 1;
  min-height: 0;
  margin: 0 10px 11px;
  border-radius: 5px;
  overflow: hidden;
  background: #34474e;
`;

const FixturePanel = styled.section`
  display: flex;
  flex-direction: column;
  flex: 1;
  min-width: 0;
`;

const Toolbar = styled.div`
  display: flex;
  align-items: center;
  gap: 7px;
  height: 34px;
  padding: 2px 7px 0 8px;
  font-size: 12px;
`;

const ViewLabel = styled.label`
  padding-top: 2px;
`;

const SelectBox = styled.div`
  position: relative;
  width: 67px;
  height: 28px;
  background: #63777f;
  border-radius: 3px;
  box-shadow: 0 1px 1px #22313788;

  select {
    appearance: none;
    width: 100%;
    height: 100%;
    padding-left: 8px;
    font-size: 13px;
  }
  svg {
    position: absolute;
    top: 8px;
    right: 10px;
    pointer-events: none;
  }
  ${(p) =>
    p.$wide &&
    css`
      width: 112px;
      border: 2px solid #5a6e78;
      background: #768993;
      border-radius: 3px 0 0 3px;

      select {
        padding-left: 6px;
        font-size: 12px;
      }
      svg {
        top: 6px;
      }
    `}
  ${(p) =>
    p.$plain &&
    css`
      margin-left: 6px;
      background: none;
      box-shadow: none;

      select {
        padding-top: 1px;
        font-size: 12px;
      }
      svg {
        right: 12px;
      }
    `}
`;

const SeasonGroup = styled.div`
  display: flex;
  margin-left: auto;
`;

const PageButton = styled.button`
  display: flex;
  align-items: center;
  justify-content: center;
  width: 33px;
  height: 28px;
  background: #63777f;
  border-radius: 0 3px 3px 0;

  &:disabled {
    width: 36px;
    color: #6c7c82;
    background: #435860;
    border-radius: 0;
  }
`;

const ListArea = styled.div`
  display: flex;
  gap: 5px;
  flex: 1;
  min-height: 0;
  padding: 0 12px 0 6px;
`;

const Scroller = styled.div`
  flex: 1;
  min-width: 0;
  overflow: hidden;
`;

const ScrollTrack = styled.div`
  width: 4px;
  padding-top: 123px;

  i {
    display: block;
    height: 326px;
    background: #5f7078;
    border-radius: 2px;
  }
`;

const Table = styled.table`
  width: 100%;
  table-layout: fixed;
  border-collapse: collapse;
  font-size: 14px;

  td, th {
    height: 28px;
    padding: 2px 0 0;
    text-align: left;
    white-space: nowrap;
  }
  thead th {
    height: 26px;
    font-size: 10px;
    font-weight: 400;
    color: #b4bfc2;
    border-bottom: 1px solid #2c3d44;
  }
`;

const Th = styled.th`
  && {
    padding-left: ${(p) => (p.$center ? 0 : "4px")};
  }
  ${Table} && {
    text-align: ${(p) => (p.$center ? "center" : "left")};
  }
  &&:last-child {
    padding-left: 2px;
  }
`;

const SortLabel = styled.span`
  display: flex;
  align-items: center;
  justify-content: space-between;
  padding-right: 8px;
`;

const Row = styled.tr`
  background: ${(p) => ({ cup: "#295b6e", friendly: "#484a68" })[p.$kind] || "transparent"};

  &:nth-child(odd) {
    background: ${(p) => ({ cup: "#316074", friendly: "#4a4c69" })[p.$kind] || "#3c4d54"};
  }
`;

const MonthCell = styled.td`
  ${Table} && {
    padding: 4px 0 0 16px;
    font-size: 10px;
    color: #c0c9cc;
  }
`;

const Cell = styled.span`
  display: flex;
  align-items: center;
  gap: 1px;
  padding-left: 1px;
`;

const Opponent = styled(Cell)`
  gap: 4px;
  padding-left: 7px;
  font-size: 13px;
`;

const CenterTd = styled.td`
  ${Table} && {
    text-align: center;
  }
  svg {
    margin: 0 auto;
  }
`;

const CompetitionTd = styled.td`
  font-size: 13px;
  ${Table} && {
    padding-left: 4px;
  }
`;

const PanelFooter = styled.div`
  display: flex;
  justify-content: flex-end;
  height: 38px;
  padding: 2px 11px 7px;
`;

const SolidButton = styled.button`
  width: 86px;
  padding-right: 4px;
  background: #63777f;
  border-radius: 3px;
`;

const MatchPanel = styled.aside`
  display: flex;
  flex-direction: column;
  flex: none;
  width: calc(100% / 3);
  background: #2d393f;
  padding: 36px 0 7px 4px;
  text-align: center;
`;

const ScoreRow = styled.div`
  display: grid;
  grid-template-columns: repeat(3, 1fr);
  place-items: center;
  padding: 0 48px;

  strong {
    font-size: 34px;
    line-height: 40px;
    font-weight: 700;
  }
`;

const Scorers = styled.ul`
  width: 50%;
  padding: 3px 13px 0 0;
  list-style: none;
  text-align: right;
  line-height: 18px;
`;

const Competition = styled.div`
  display: flex;
  flex-direction: column;
  align-items: center;
  gap: 4px;
  padding-top: 17px;
`;

const MatchDate = styled.p`
  padding-top: 14px;
`;

const Stadium = styled.div`
  display: flex;
  align-items: center;
  justify-content: center;
  gap: 6px;
  padding-top: 2px;
`;

const Attendance = styled.p`
  padding: 16px 0 15px;
`;

const Ratings = styled.table`
  width: 100%;
  table-layout: fixed;
  border-collapse: collapse;
  line-height: 19px;

  th, td {
    height: 19px;
    padding: 0;
    font-weight: 400;
    text-align: left;
  }
  th {
    width: 340px;
    text-align: right;
  }
  td:nth-child(2) {
    width: 60px;
    padding-left: 14px;
    font-size: 14px;
  }
`;

const Mark = styled.span`
  display: flex;
  align-items: center;
  gap: 4px;
`;

const LinkRow = styled.div`
  display: flex;
  justify-content: flex-end;
  gap: 2px;
  margin-top: auto;
  padding-right: 16px;
`;

const OutlineButton = styled.button`
  display: flex;
  align-items: center;
  gap: 1px;
  height: 26px;
  padding: 0 4px 0 8px;
  color: #74a5d6;
  border: 1px solid #64849d;
  border-radius: 2px;
  background: #2b4050;
  font-size: 12px;
`;

const Taskbar = styled.div`
  display: flex;
  justify-content: flex-end;
  gap: 164px;
  flex: none;
  height: 8px;
  padding: 3px 74px 0 0;
  overflow: hidden;
  background: #332d1c;
  font-size: 12px;
  line-height: 12px;
`;

const Watermark = styled.div`
  position: absolute;
  right: 8px;
  bottom: 6px;
  display: flex;
  align-items: flex-end;
  pointer-events: none;

  p {
    font-family: Roboto, "Noto Sans CJK SC", sans-serif;
    font-size: 18px;
    line-height: 18px;
    font-weight: 700;
    font-style: italic;
    text-align: right;
    text-shadow: 1px 1px 2px #000;
  }
  span {
    display: block;
    font-size: 14px;
    line-height: 14px;
    font-weight: 900;
    font-style: normal;
  }
`;
